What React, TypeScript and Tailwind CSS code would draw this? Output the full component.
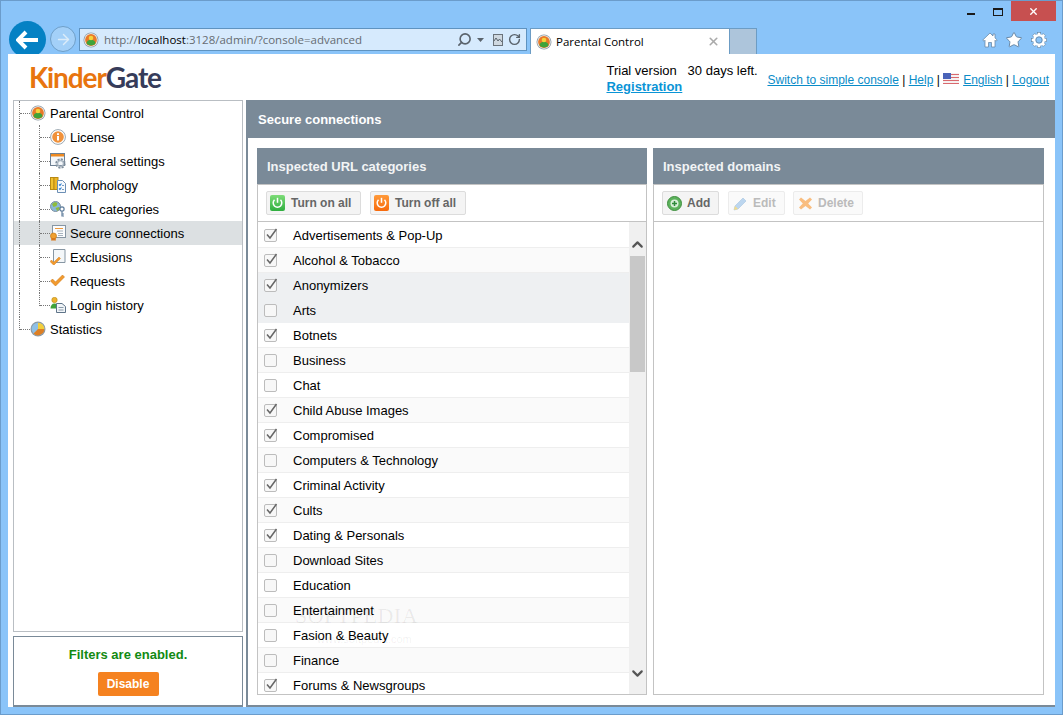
import { Star, RotateCw, Search, ChevronDown, ChevronUp, X, ArrowRight } from "lucide-react";

const CATEGORIES: [string, boolean][] = [
  ["Advertisements & Pop-Up", true],
  ["Alcohol & Tobacco", true],
  ["Anonymizers", true],
  ["Arts", false],
  ["Botnets", true],
  ["Business", false],
  ["Chat", false],
  ["Child Abuse Images", true],
  ["Compromised", true],
  ["Computers & Technology", false],
  ["Criminal Activity", true],
  ["Cults", true],
  ["Dating & Personals", true],
  ["Download Sites", false],
  ["Education", false],
  ["Entertainment", false],
  ["Fasion & Beauty", false],
  ["Finance", false],
  ["Forums & Newsgroups", true],
];

const ParentalIcon = ({ size = 16 }: { size?: number }) => (
  <svg width={size} height={size} viewBox="0 0 16 16">
    <circle cx="8" cy="8" r="7.500" fill="#8c9aa5" />
    <circle cx="8" cy="8" r="6.700" fill="#f2f4f5" />
    <circle cx="8" cy="8" r="5.900" fill="#e8792a" />
    <path d="M3.500 11.500c.2-2.400 2-3.700 4.500-3.700s4.300 1.300 4.500 3.700a5.900 5.900 0 0 1-9 0z" fill="#3fa33a" />
    <circle cx="8" cy="6" r="2.300" fill="#f5d33c" />
  </svg>
);

const InfoIcon = () => (
  <svg width="16" height="16" viewBox="0 0 16 16">
    <circle cx="8" cy="8" r="7.400" fill="#fff" stroke="#9aa7b1" />
    <circle cx="8" cy="8" r="5.800" fill="#f0913a" />
    <rect x="7" y="7" width="2" height="4.500" fill="#fff" />
    <rect x="7" y="4.200" width="2" height="1.800" fill="#fff" />
  </svg>
);

const SettingsIcon = () => (
  <svg width="16" height="16" viewBox="0 0 16 16">
    <rect x="0.500" y="0.500" width="14" height="12" fill="#f4f7fa" stroke="#6f8193" />
    <rect x="1" y="1" width="13" height="2.500" fill="#ee8a22" />
    <circle cx="10.500" cy="10.500" r="4" fill="none" stroke="#7f8e9c" strokeWidth="2.400" strokeDasharray="2 1.100" />
    <circle cx="10.500" cy="10.500" r="2.900" fill="none" stroke="#aab6c1" strokeWidth="1.200" />
  </svg>
);

const MorphologyIcon = () => (
  <svg width="16" height="16" viewBox="0 0 16 16">
    <rect x="0.500" y="0.500" width="3.500" height="12" fill="#f2c230" stroke="#b98a14" />
    <rect x="4" y="0.500" width="4" height="12" fill="#eeb625" stroke="#b98a14" />
    <path d="M7.500 3.500h5l3 3v9h-8z" fill="#f7fafd" stroke="#6c8fb5" />
    <path d="M9 7.500l1 1 1.500-2M9 11.500l1 1 1.500-2" fill="none" stroke="#2f7fd0" strokeWidth="1.100" />
    <path d="M12 8.500h2M12 12.500h2" stroke="#7a9cc0" />
  </svg>
);

const UrlIcon = () => (
  <svg width="16" height="16" viewBox="0 0 16 16">
    <circle cx="5.500" cy="5.500" r="5" fill="#8bb8d8" stroke="#7d8fa0" />
    <path d="M2 3l3-2 2.500 1-1 3-3 1zM5.500 7l3.500-1 .8 1.500-2.500 2.500z" fill="#8fbc3a" />
    <circle cx="12" cy="8" r="2.100" fill="#fff" stroke="#5f7d9c" strokeWidth="1.200" />
    <path d="M12 10.200V15.500M12 13h2M12 15h2" stroke="#5f7d9c" strokeWidth="1.200" fill="none" />
  </svg>
);

const SecureIcon = () => (
  <svg width="16" height="16" viewBox="0 0 16 16">
    <rect x="2.500" y="0.500" width="13" height="12" fill="#fbfcfd" stroke="#8796a3" />
    <path d="M5 3.500h8" stroke="#ee9a3c" />
    <path d="M7 6h6M8 8.500h5M8 10.500h5" stroke="#a7b3be" />
    <circle cx="3.500" cy="11" r="3" fill="#f0a030" stroke="#c47a16" strokeWidth="0.700" />
    <path d="M1.500 13l-.5 2.500h5L5.500 13z" fill="#d9791c" />
  </svg>
);

const CheckMark = () => (
  <path d="M0 8l2-2 3 3 7-7 2 2-9 9z" fill="#f29a2e" stroke="#cf7a18" strokeWidth="0.600" />
);

const ExclusionsIcon = () => (
  <svg width="16" height="16" viewBox="0 0 16 16">
    <path d="M3.500 0.500h11.500v13h-11.500z" fill="#f4f7f9" stroke="#8796a3" />
    <g transform="translate(0 6.500) scale(0.75)">
      <CheckMark />
    </g>
  </svg>
);

const RequestsIcon = () => (
  <svg width="16" height="16" viewBox="0 0 16 16">
    <g transform="translate(0.500 0)">
      <CheckMark />
    </g>
  </svg>
);

const HistoryIcon = () => (
  <svg width="16" height="16" viewBox="0 0 16 16">
    <circle cx="4.500" cy="3" r="2.700" fill="#eeb22e" stroke="#b98a14" strokeWidth="0.600" />
    <path d="M0.500 11.500c0-3 1.500-5 4-5s3.500 1.500 3.500 5z" fill="#3fa33a" />
    <path d="M6.500 6.500h5.500l3.500 3v6h-9z" fill="#f1f5f8" stroke="#5f7489" />
    <path d="M8.500 10.500h5M8.500 13h5" stroke="#8a9aa9" />
  </svg>
);

const StatsIcon = () => (
  <svg width="16" height="16" viewBox="0 0 16 16">
    <circle cx="8" cy="8" r="7.500" fill="#8c9aa5" />
    <circle cx="8" cy="8" r="6.300" fill="#8fc0e6" />
    <path d="M8 8V1.700A6.300 6.300 0 0 1 14.300 8z" fill="#f3cf3c" />
    <path d="M8 8h6.300A6.300 6.300 0 0 1 3.500 12.400z" fill="#dd7f24" />
  </svg>
);

const HomeIcon = () => (
  <svg width="16" height="16" viewBox="0 0 16 16">
    <path
      d="M8 1L.8 8l1.200 1.200 1-1V15h3.500v-4.500h3V15H13V8.200l1 1L15.200 8 13 5.900V2h-2v2L8 1z"
      fill="#fff"
      stroke="#5f7f9d"
      strokeWidth="0.700"
    />
  </svg>
);

const GearIcon = () => (
  <svg width="16" height="16" viewBox="0 0 16 16">
    {[0, 45, 90, 135, 180, 225, 270, 315].map((deg) => (
      <rect
        key={deg}
        x="6.300"
        y="0.400"
        width="3.400"
        height="3.600"
        fill="#fff"
        stroke="#5f7f9d"
        strokeWidth="0.600"
        transform={`rotate(${deg} 8 8)`}
      />
    ))}
    <circle cx="8" cy="8" r="4.700" fill="none" stroke="#fff" strokeWidth="2.400" />
    <circle cx="8" cy="8" r="3.100" fill="#8ac4f9" stroke="#5f7f9d" strokeWidth="0.700" />
  </svg>
);

const TREE = [
  { label: "License", icon: <InfoIcon /> },
  { label: "General settings", icon: <SettingsIcon /> },
  { label: "Morphology", icon: <MorphologyIcon /> },
  { label: "URL categories", icon: <UrlIcon /> },
  { label: "Secure connections", icon: <SecureIcon />, active: true },
  { label: "Exclusions", icon: <ExclusionsIcon /> },
  { label: "Requests", icon: <RequestsIcon /> },
  { label: "Login history", icon: <HistoryIcon /> },
];

const Guide = ({ stub, half, width }: { stub?: boolean; half?: boolean; width: string }) => (
  <div className={`${width} shrink-0 ${half ? "h-[13px]" : "h-full"} border-l border-dotted border-[#777]`}>
    {stub && <div className="mt-[12px] h-0 border-t border-dotted border-[#777]" />}
  </div>
);

const TreeRoot = ({ label, icon, half }: { label: string; icon: React.ReactNode; half?: boolean }) => (
  <div className="flex h-[24px] pl-[5px]">
    <Guide stub half={half} width="w-[11px]" />
    <div className="flex w-[20px] shrink-0 items-center">{icon}</div>
    <span className="leading-[26px]">{label}</span>
  </div>
);

const PowerIcon = ({ from, to }: { from: string; to: string }) => (
  <svg width="15" height="16" viewBox="0 0 15 16" className="mr-px">
    <defs>
      <linearGradient id={from} x1="0" y1="0" x2="0" y2="1">
        <stop offset="0" stopColor={from} />
        <stop offset="1" stopColor={to} />
      </linearGradient>
    </defs>
    <rect width="15" height="16" rx="2" fill={`url(#${from})`} />
    <path d="M4.500 4.800a4.300 4.300 0 1 0 6 0" fill="none" stroke="#fff" strokeWidth="1.500" />
    <path d="M7.500 2.800v5" stroke="#fff" strokeWidth="1.500" />
  </svg>
);

const ToolButton = ({
  icon,
  label,
  box,
  disabled,
}: {
  icon: React.ReactNode;
  label: string;
  box: string;
  disabled?: boolean;
}) => (
  <div
    className={`flex h-[24px] ${box} items-center gap-[5px] rounded-[2px] border text-[12px] font-bold ${
      disabled
        ? "border-[#ececec] bg-[#fafafa] text-[#bbbbbb]"
        : "border-[#dcdcdc] bg-[#f4f4f4] text-[#666666]"
    }`}
  >
    {icon}
    <span>{label}</span>
  </div>
);

const PanelHeader = ({ title }: { title: string }) => (
  <div className="flex h-[36px] shrink-0 items-center bg-[#7a8a98] pl-[10px] pt-[2px] text-[13px] font-bold text-[#f2f4f5]">
    {title}
  </div>
);

const CheckBox = ({ checked }: { checked: boolean }) => (
  <div className="relative h-[13px] w-[13px] shrink-0 rounded-[2px] border border-[#bcbcbc] bg-[#f7f7f7]">
    {checked && (
      <svg className="absolute -top-[2px] left-0" width="13" height="13" viewBox="0 0 13 13">
        <path d="M2 6.500l3 3.500 6.500-9" fill="none" stroke="#666" strokeWidth="1.500" />
      </svg>
    )}
  </div>
);

export default function App() {
  return (
    <div className="flex h-[715px] w-[1063px] flex-col overflow-hidden border border-[#6b9ccb] bg-[#8ac4f9] px-[7px] pb-[7px] font-['Liberation_Sans',sans-serif] text-black">
      {/* window buttons */}
      <div className="-mr-px flex h-[21px] shrink-0 items-start justify-end">
        <div className="mr-[18px] mt-[12px] h-[2px] w-[8px] bg-[#1a1a1a]" />
        <div className="mr-[8px] mt-[7px] h-[8px] w-[10px] border border-t-2 border-[#1a1a1a]" />
        <div className="flex h-[20px] w-[45px] items-center justify-center bg-[#c75050]">
          <X size={11} strokeWidth={3} className="text-white" />
        </div>
      </div>

      {/* browser nav */}
      <div className="flex h-[32px] shrink-0 items-start">
        <div className="-mt-px ml-px flex h-[37px] w-[37px] shrink-0 items-center justify-center rounded-full bg-[#0581c4]">
          <svg width="24" height="20" viewBox="0 0 24 20">
            <path d="M10 2l-8 8 8 8M3 10h19" fill="none" stroke="#fff" strokeWidth="4" />
          </svg>
        </div>
        <div className="ml-[4px] mt-[4px] flex h-[26px] w-[26px] shrink-0 items-center justify-center rounded-full border border-[#6f9fc8] bg-[#a3d0f8]">
          <ArrowRight size={17} strokeWidth={2} stroke="#dcecf9" />
        </div>
        <div className="ml-[3px] mt-[6px] flex h-[23px] w-[448px] shrink-0 items-center border border-[#5f93c0] bg-[#d6eafd] pl-[3px] pr-[5px] font-['Open_Sans',sans-serif] text-[11.5px] text-[#666c72]">
          <ParentalIcon />
          <span className="ml-[5px] flex-1">
            http://<span className="text-black">localhost</span>:3128/admin/?console=advanced
          </span>
          <Search size={15} strokeWidth={2.600} className="-scale-x-100 text-[#5a636c]" />
          <svg width="7" height="4" viewBox="0 0 7 4" className="ml-[5px] text-[#5a636c]">
            <path d="M0 0h7L3.500 4z" fill="currentColor" />
          </svg>
          <svg width="10" height="12" viewBox="0 0 10 12" className="ml-[9px]">
            <rect x="0.500" y="0.500" width="9" height="11" fill="#cfd8e0" stroke="#6b737b" />
            <path d="M1 7l2-3 2 3 1.500-2L9 8" fill="none" stroke="#5a636c" />
          </svg>
          <RotateCw size={13} strokeWidth={2.600} className="ml-[5px] text-[#5a636c]" />
        </div>
        <div className="ml-[3px] mt-[6px] flex h-[26px] w-[200px] shrink-0 items-center border border-b-0 border-[#6c9cc4] bg-white pl-[5px] pr-[9px] font-['Open_Sans',sans-serif] text-[11.5px]">
          <ParentalIcon />
          <span className="ml-[4px] flex-1">Parental Control</span>
          <X size={13} strokeWidth={3} className="text-[#aaaaaa]" />
        </div>
        <div className="mt-[6px] h-[26px] w-[27px] shrink-0 border border-b-0 border-l-0 border-[#6c9cc4] bg-[#adc5db]" />
        <div className="ml-auto mr-[8px] mt-[9px] flex items-center">
          <HomeIcon />
          <Star size={18} fill="#ffffff" stroke="#5f7f9d" strokeWidth={1.200} className="ml-[7px]" />
          <div className="ml-[8px]">
            <GearIcon />
          </div>
        </div>
      </div>

      {/* page */}
      <div className="relative z-10 flex min-h-0 flex-1 flex-col bg-white">
        <div className="flex h-[46px] shrink-0 items-start pl-[21px]">
          <div className="mt-[7px] font-['Lato',sans-serif] text-[28px] font-bold leading-[32px] tracking-[-1.100px]">
            <span className="text-[#e8750f]">Kinder</span>
            <span className="text-[#363c5a]">Gate</span>
          </div>
          <div className="ml-auto mt-[9px] w-[161px] text-[13px] leading-[16px]">
            <div className="whitespace-pre">Trial version   30 days left.</div>
            <div className="font-bold text-[#0a94d6] underline">Registration</div>
          </div>
          <div className="mr-[6px] mt-[18px] flex items-center whitespace-pre text-[12px] leading-[16px]">
            <span className="text-[#0a8cc8] underline">Switch to simple console</span>
            <span> | </span>
            <span className="text-[#0a8cc8] underline">Help</span>
            <span> | </span>
            <svg width="16" height="11" viewBox="0 0 16 11" className="mb-[3px] mr-[4px]">
              <rect width="16" height="11" fill="#f6f0f0" />
              <path d="M0 1.500h16M0 4.500h16M0 7.500h16M0 10.500h16" stroke="#d9696e" />
              <rect width="8" height="6" fill="#4a63b8" />
            </svg>
            <span className="text-[#0a8cc8] underline">English</span>
            <span> | </span>
            <span className="text-[#0a8cc8] underline">Logout</span>
          </div>
        </div>

        <div className="flex min-h-0 flex-1">
          {/* sidebar */}
          <div className="ml-[5px] mr-[3px] flex w-[230px] shrink-0 flex-col gap-[4px] text-[13px]">
            <div className="min-h-0 flex-1 border border-[#b9bec3] pb-px">
              <TreeRoot label="Parental Control" icon={<ParentalIcon />} />
              {TREE.map((item, i) => (
                <div key={item.label} className={`flex h-[24px] pl-[5px] ${item.active ? "bg-[#dce0e2]" : ""}`}>
                  <Guide width="w-[20px]" />
                  <Guide stub half={i === TREE.length - 1} width="w-[11px]" />
                  <div className="flex w-[20px] shrink-0 items-center">{item.icon}</div>
                  <span className="leading-[26px]">{item.label}</span>
                </div>
              ))}
              <TreeRoot label="Statistics" icon={<StatsIcon />} half />
            </div>
            <div className="flex h-[71px] shrink-0 flex-col items-center border border-b-2 border-[#7a8a98] pt-[9px]">
              <div className="text-[13px] font-bold leading-[17px] text-[#128a12]">Filters are enabled.</div>
              <div className="mt-[9px] flex h-[24px] w-[61px] items-center justify-center rounded-[2px] bg-[#f58220] text-[12px] font-bold text-white">
                Disable
              </div>
            </div>
          </div>

          {/* main */}
          <div className="flex min-w-0 flex-1 flex-col border-b-2 border-l-2 border-[#7a8a98]">
            <div className="flex h-[38px] shrink-0 items-center bg-[#7a8a98] pl-[10px] pt-[2px] text-[13px] font-bold text-white">
              Secure connections
            </div>
            <div className="flex min-h-0 flex-1 gap-[6px] pb-[10px] pl-[9px] pr-[11px] pt-[10px]">
              <div className="flex w-[390px] shrink-0 flex-col border-b border-[#c3c3c3]">
                <PanelHeader title="Inspected URL categories" />
                <div className="flex min-h-0 flex-1 flex-col border-x border-t border-[#c3c3c3]">
                  <div className="flex h-[37px] shrink-0 items-center gap-[9px] border-b border-[#c3c3c3] pl-[8px]">
                    <ToolButton icon={<PowerIcon from="#7ddc78" to="#2fae3f" />} label="Turn on all" box="w-[95px] pl-[3px]" />
                    <ToolButton icon={<PowerIcon from="#ff9a3a" to="#f76a0c" />} label="Turn off all" box="w-[96px] pl-[3px]" />
                  </div>
                  <div className="relative flex min-h-0 flex-1 overflow-hidden">
                    <div className="min-w-0 flex-1 pt-px">
                      {CATEGORIES.map(([name, checked], i) => (
                        <div
                          key={name}
                          className={`flex h-[25px] items-center border-b border-[#eeeeee] pl-[6px] text-[13px] ${
                            i === 2 || i === 3 ? "border-[#eef0f2] bg-[#eef0f2]" : i % 2 ? "bg-[#fafafa]" : "bg-white"
                          }`}
                        >
                          <CheckBox checked={checked} />
                          <span className="ml-[16px] pt-px">{name}</span>
                        </div>
                      ))}
                    </div>
                    <div className="flex w-[17px] shrink-0 flex-col bg-[#f0f0f0]">
                      <div className="flex h-[34px] items-end justify-center pb-[2px]">
                        <ChevronUp size={19} strokeWidth={3} className="text-[#555555]" />
                      </div>
                      <div className="ml-px h-[116px] w-[15px] bg-[#c8c8c8]" />
                      <div className="flex flex-1 items-end justify-center pb-[11px]">
                        <ChevronDown size={19} strokeWidth={3} className="text-[#555555]" />
                      </div>
                    </div>
                    <div className="pointer-events-none absolute left-[37px] top-[383px] font-['Liberation_Serif',serif] text-[22px] leading-[22px] tracking-[0.5px] text-[#000000]/[0.07]">
                      SOFTPEDIA
                      <div className="ml-[22px] mt-[6px] font-['Liberation_Sans',sans-serif] text-[11px] leading-[13px] tracking-normal">
                        www.softpedia.com
                      </div>
                    </div>
                  </div>
                </div>
              </div>

              <div className="flex min-w-0 flex-1 flex-col border-b border-[#c3c3c3]">
                <PanelHeader title="Inspected domains" />
                <div className="flex min-h-0 flex-1 flex-col border-x border-t border-[#c3c3c3]">
                  <div className="flex h-[37px] shrink-0 items-center gap-[9px] border-b border-[#c3c3c3] pl-[8px]">
                    <ToolButton
                      label="Add"
                      box="w-[57px] pl-[4px]"
                      icon={
                        <svg width="15" height="15" viewBox="0 0 15 15">
                          <circle cx="7.500" cy="7.500" r="7" fill="#5cb25c" stroke="#3f8f3f" />
                          <circle cx="7.500" cy="7.500" r="4" fill="#d9efd9" />
                          <path d="M7.500 5v5M5 7.500h5" stroke="#2f8a3a" strokeWidth="1.500" />
                        </svg>
                      }
                    />
                    <ToolButton
                      label="Edit"
                      box="w-[57px] pl-[4px]"
                      disabled
                      icon={
                        <svg width="15" height="15" viewBox="0 0 15 15">
                          <path d="M1 14l1-4 8-8 3 3-8 8z" fill="#bcd6ef" stroke="#a8c4df" strokeWidth="0.600" />
                          <path d="M1 14l1-4 3 3z" fill="#f3dc8c" />
                        </svg>
                      }
                    />
                    <ToolButton
                      label="Delete"
                      box="w-[70px] -ml-px pl-[4px]"
                      disabled
                      icon={
                        <svg width="15" height="15" viewBox="0 0 15 15">
                          <path d="M3 1.500l4.500 3.500L12 1.500 14 3.500 10.200 7.500l3.800 4L12 13.500 7.500 10 3 13.500 1 11.500l3.800-4L1 3.500z" fill="#f9bd7f" />
                        </svg>
                      }
                    />
                  </div>
                  <div className="flex-1" />
                </div>
              </div>
            </div>
          </div>
        </div>
      </div>
    </div>
  );
}
